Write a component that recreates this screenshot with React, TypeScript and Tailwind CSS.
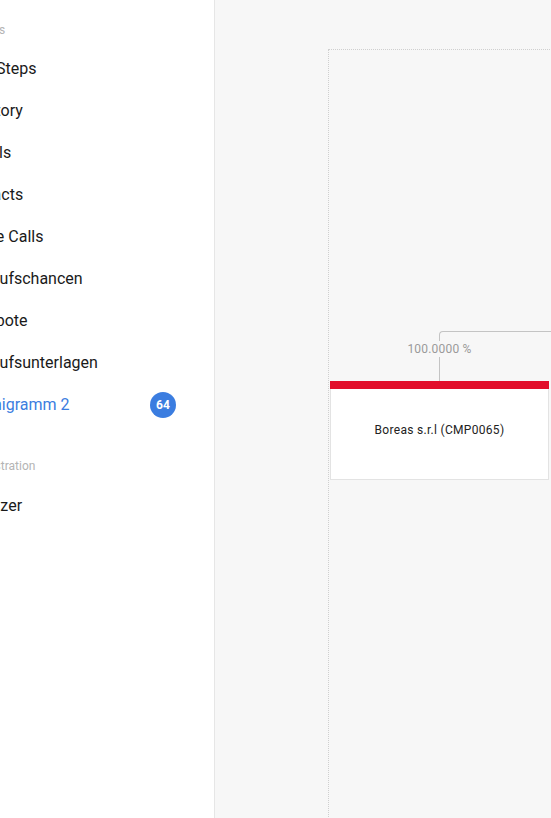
import React from 'react'

const font = { fontFamily: 'Roboto, "Liberation Sans", sans-serif' }

const items = [
  'Next Steps',
  'Directory',
  'E-Mails',
  'Contacts',
  'Phone Calls',
  'Verkaufschancen',
  'Angebote',
  'Verkaufsunterlagen',
]

function Sidebar() {
  return (
    <aside className="w-[215px] shrink-0 overflow-hidden bg-white border-r border-[#e6e6e6] h-screen">
      <div className="-ml-[41px] w-[256px]">
        <div className="h-[20px] mt-[20px] flex items-center text-[12px] text-[#b4b4b4]">Sections</div>
        <nav className="mt-[8px] flex flex-col">
          {items.map((label) => (
            <div key={label} className="h-[42px] flex items-center text-[16px] text-[#1a1a1a]">
              {label}
            </div>
          ))}
          <div className="h-[42px] flex items-center justify-between pr-[39px] text-[16px] text-[#3b7de0]">
            <span>Organigramm 2</span>
            <span className="w-[26px] h-[26px] rounded-full bg-[#3b7de0] text-white text-[12px] font-bold flex items-center justify-center">
              64
            </span>
          </div>
        </nav>
        <div className="h-[20px] mt-[30px] -ml-[2px] flex items-center text-[12px] text-[#b4b4b4]">Administration</div>
        <div className="mt-[9px] h-[42px] flex items-center text-[16px] text-[#1a1a1a]">Benutzer</div>
      </div>
    </aside>
  )
}

function Canvas() {
  return (
    <main className="relative flex-1 h-screen overflow-hidden bg-[#f7f7f7]">
      <div className="absolute left-[113px] top-[49px] w-[600px] h-[900px] border border-dotted border-[#cfcfcf]">
        {/* connector */}
        <div className="absolute left-[110px] top-[281px] w-[400px] h-[52px] border-l border-t border-[#c4c4c4] rounded-tl-[4px]" />
        <div className="absolute left-[60px] top-[291px] w-[101px] h-[16px] flex items-center justify-center bg-[#f7f7f7] text-[12px] text-[#9a9a9a] tracking-[0.2px]">
          100.0000 %
        </div>
        {/* node */}
        <div className="absolute left-[1px] top-[331px] w-[219px] h-[99px] bg-white border border-[#e3e3e3]">
          <div className="h-[8px] -mx-px -mt-px bg-[#e20d2a]" />
          <div className="h-[82px] flex items-center justify-center text-[12px] text-[#222] tracking-[0.3px]">
            Boreas s.r.l (CMP0065)
          </div>
        </div>
      </div>
    </main>
  )
}

export default function App() {
  return (
    <div className="flex w-full h-screen overflow-hidden" style={font}>
      <Sidebar />
      <Canvas />
    </div>
  )
}
